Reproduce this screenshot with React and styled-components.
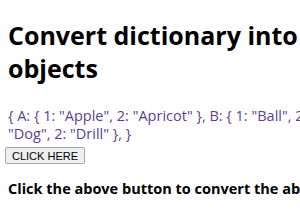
import React from 'react'
import styled, {createGlobalStyle} from 'styled-components'

const GlobalStyle = createGlobalStyle`
  html, body {
    margin: 0;
    overflow: hidden;
    background: #fff;
  }
  body {
    padding: 8px;
    font-family: "Open Sans", "Noto Sans", sans-serif;
    color: #000;
  }
`

const Page = styled.div`
  width: 402px;
`

const Title = styled.h1`
  max-width: 370px;
  margin: 11px 0 22px;
  font-size: 25px;
  line-height: 33px;
  font-weight: 700;
`

const Dictionary = styled.p`
  margin: 0;
  font-size: 14.5px;
  line-height: 18px;
  color: #5c3f91;
`

const ActionButton = styled.button`
  display: block;
  margin: 4px 0 0 -3px;
  padding: 0 6px;
  height: 17px;
  font-family: "Liberation Sans", Arial, sans-serif;
  font-size: 11px;
  color: #000;
  background: #efefef;
  border: 1px solid #a9a9a9;
  border-radius: 2px;
`

const Note = styled.h3`
  margin: 15px 0 0;
  font-size: 14.5px;
  line-height: 20px;
  font-weight: 700;
  white-space: nowrap;
`

const App = () => (
  <Page>
    <GlobalStyle />
    <Title>Convert dictionary into objects</Title>
    <Dictionary>
      {'{ A: { 1: "Apple", 2: "Apricot" }, B: { 1: "Ball", 2: "Bat" }, D: { 1: "Dog", 2: "Drill" }, }'}
    </Dictionary>
    <ActionButton>CLICK HERE</ActionButton>
    <Note>Click the above button to convert the above dictionary into objects</Note>
  </Page>
)

export default App
